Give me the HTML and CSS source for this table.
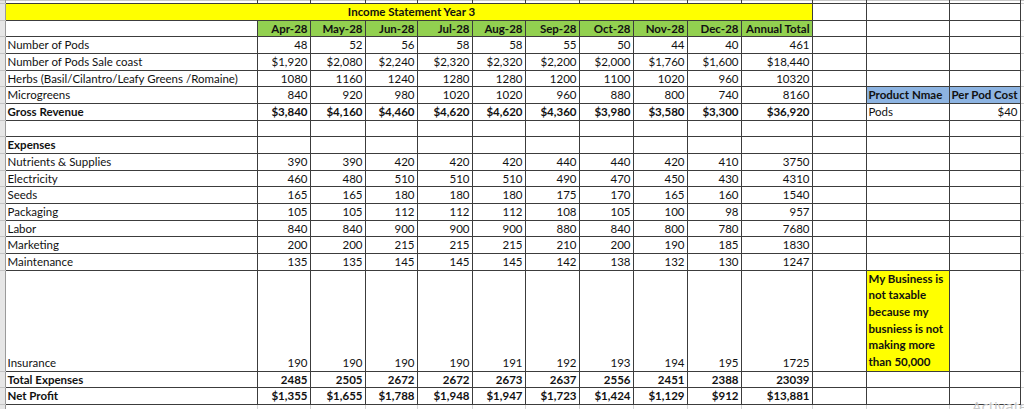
FILE: index.html
```html
<!DOCTYPE html>
<html>
<head>
<meta charset="utf-8">
<link rel="stylesheet" href="styles.css">
</head>
<body>
<div class="sheet">
<table class="grid">
<colgroup>
<col class="c-strip"><col class="c-label">
<col class="c-apr"><col class="c-may"><col class="c-jun"><col class="c-jul"><col class="c-aug"><col class="c-sep"><col class="c-oct"><col class="c-nov"><col class="c-dec">
<col class="c-total"><col class="c-gap"><col class="c-prod"><col class="c-cost"><col class="c-edge">
</colgroup>
<tbody>
<tr class="r-top"><td class="strip"></td><td></td><td></td><td></td><td></td><td></td><td></td><td></td><td></td><td></td><td></td><td></td><td></td><td></td><td></td><td class="edge"></td></tr>
<tr><td class="strip"></td><td class="title" colspan="11">Income Statement Year 3</td><td></td><td></td><td></td><td class="edge"></td></tr>
<tr class="head"><td class="strip"></td><td class="plain"></td><td class="month">Apr-28</td><td class="month">May-28</td><td class="month">Jun-28</td><td class="month">Jul-28</td><td class="month">Aug-28</td><td class="month">Sep-28</td><td class="month">Oct-28</td><td class="month">Nov-28</td><td class="month">Dec-28</td><td class="month">Annual Total</td><td></td><td></td><td></td><td class="edge"></td></tr>
<tr><td class="strip"></td><td class="lbl">Number of Pods</td><td class="num">48</td><td class="num">52</td><td class="num">56</td><td class="num">58</td><td class="num">58</td><td class="num">55</td><td class="num">50</td><td class="num">44</td><td class="num">40</td><td class="num">461</td><td></td><td></td><td></td><td class="edge"></td></tr>
<tr><td class="strip"></td><td class="lbl">Number of Pods Sale coast</td><td class="num">$1,920</td><td class="num">$2,080</td><td class="num">$2,240</td><td class="num">$2,320</td><td class="num">$2,320</td><td class="num">$2,200</td><td class="num">$2,000</td><td class="num">$1,760</td><td class="num">$1,600</td><td class="num">$18,440</td><td></td><td></td><td></td><td class="edge"></td></tr>
<tr><td class="strip"></td><td class="lbl">Herbs (Basil/Cilantro/Leafy Greens /Romaine)</td><td class="num">1080</td><td class="num">1160</td><td class="num">1240</td><td class="num">1280</td><td class="num">1280</td><td class="num">1200</td><td class="num">1100</td><td class="num">1020</td><td class="num">960</td><td class="num">10320</td><td></td><td></td><td></td><td class="edge"></td></tr>
<tr><td class="strip"></td><td class="lbl">Microgreens</td><td class="num">840</td><td class="num">920</td><td class="num">980</td><td class="num">1020</td><td class="num">1020</td><td class="num">960</td><td class="num">880</td><td class="num">800</td><td class="num">740</td><td class="num">8160</td><td></td><td class="blue">Product Nmae</td><td class="blue">Per Pod Cost</td><td class="edge"></td></tr>
<tr class="bold"><td class="strip"></td><td class="lbl">Gross Revenue</td><td class="num">$3,840</td><td class="num">$4,160</td><td class="num">$4,460</td><td class="num">$4,620</td><td class="num">$4,620</td><td class="num">$4,360</td><td class="num">$3,980</td><td class="num">$3,580</td><td class="num">$3,300</td><td class="num">$36,920</td><td></td><td class="lbl normal">Pods</td><td class="num normal">$40</td><td class="edge"></td></tr>
<tr><td class="strip"></td><td></td><td></td><td></td><td></td><td></td><td></td><td></td><td></td><td></td><td></td><td></td><td></td><td></td><td></td><td class="edge"></td></tr>
<tr class="bold"><td class="strip"></td><td class="lbl">Expenses</td><td></td><td></td><td></td><td></td><td></td><td></td><td></td><td></td><td></td><td></td><td></td><td></td><td></td><td class="edge"></td></tr>
<tr><td class="strip"></td><td class="lbl">Nutrients &amp; Supplies</td><td class="num">390</td><td class="num">390</td><td class="num">420</td><td class="num">420</td><td class="num">420</td><td class="num">440</td><td class="num">440</td><td class="num">420</td><td class="num">410</td><td class="num">3750</td><td></td><td></td><td></td><td class="edge"></td></tr>
<tr><td class="strip"></td><td class="lbl">Electricity</td><td class="num">460</td><td class="num">480</td><td class="num">510</td><td class="num">510</td><td class="num">510</td><td class="num">490</td><td class="num">470</td><td class="num">450</td><td class="num">430</td><td class="num">4310</td><td></td><td></td><td></td><td class="edge"></td></tr>
<tr><td class="strip"></td><td class="lbl">Seeds</td><td class="num">165</td><td class="num">165</td><td class="num">180</td><td class="num">180</td><td class="num">180</td><td class="num">175</td><td class="num">170</td><td class="num">165</td><td class="num">160</td><td class="num">1540</td><td></td><td></td><td></td><td class="edge"></td></tr>
<tr><td class="strip"></td><td class="lbl">Packaging</td><td class="num">105</td><td class="num">105</td><td class="num">112</td><td class="num">112</td><td class="num">112</td><td class="num">108</td><td class="num">105</td><td class="num">100</td><td class="num">98</td><td class="num">957</td><td></td><td></td><td></td><td class="edge"></td></tr>
<tr><td class="strip"></td><td class="lbl">Labor</td><td class="num">840</td><td class="num">840</td><td class="num">900</td><td class="num">900</td><td class="num">900</td><td class="num">880</td><td class="num">840</td><td class="num">800</td><td class="num">780</td><td class="num">7680</td><td></td><td></td><td></td><td class="edge"></td></tr>
<tr><td class="strip"></td><td class="lbl">Marketing</td><td class="num">200</td><td class="num">200</td><td class="num">215</td><td class="num">215</td><td class="num">215</td><td class="num">210</td><td class="num">200</td><td class="num">190</td><td class="num">185</td><td class="num">1830</td><td></td><td></td><td></td><td class="edge"></td></tr>
<tr><td class="strip"></td><td class="lbl">Maintenance</td><td class="num">135</td><td class="num">135</td><td class="num">145</td><td class="num">145</td><td class="num">145</td><td class="num">142</td><td class="num">138</td><td class="num">132</td><td class="num">130</td><td class="num">1247</td><td></td><td></td><td></td><td class="edge"></td></tr>
<tr class="tall"><td class="strip"></td><td class="lbl">Insurance</td><td class="num">190</td><td class="num">190</td><td class="num">190</td><td class="num">190</td><td class="num">191</td><td class="num">192</td><td class="num">193</td><td class="num">194</td><td class="num">195</td><td class="num">1725</td><td></td><td class="note">My Business is<br>not taxable<br>because my<br>busniess is not<br>making more<br>than 50,000</td><td></td><td class="edge"></td></tr>
<tr class="bold"><td class="strip"></td><td class="lbl">Total Expenses</td><td class="num">2485</td><td class="num">2505</td><td class="num">2672</td><td class="num">2672</td><td class="num">2673</td><td class="num">2637</td><td class="num">2556</td><td class="num">2451</td><td class="num">2388</td><td class="num">23039</td><td></td><td></td><td></td><td class="edge"></td></tr>
<tr class="bold"><td class="strip"></td><td class="lbl">Net Profit</td><td class="num">$1,355</td><td class="num">$1,655</td><td class="num">$1,788</td><td class="num">$1,948</td><td class="num">$1,947</td><td class="num">$1,723</td><td class="num">$1,424</td><td class="num">$1,129</td><td class="num">$912</td><td class="num">$13,881</td><td></td><td></td><td></td><td class="edge"></td></tr>
<tr class="r-after"><td class="strip"></td><td></td><td></td><td></td><td></td><td></td><td></td><td></td><td></td><td></td><td></td><td></td><td></td><td></td><td></td><td class="edge"></td></tr>
</tbody>
</table>
<div class="watermark">Activate Windows</div>
</div>
</body>
</html>
```
FILE: styles.css
```css
html, body {
  margin: 0;
  padding: 0;
  background: #ffffff;
}
body {
  width: 1024px;
  height: 409px;
  overflow: hidden;
  font-family: Lato, "Liberation Sans", sans-serif;
  font-size: 11.5px;
  color: #111;
}
.sheet {
  position: relative;
  width: 1024px;
  height: 409px;
  overflow: hidden;
}
.grid {
  border-collapse: collapse;
  table-layout: fixed;
  width: 1026px;
}
.c-strip { width: 5px; }
.c-label { width: 252px; }
.c-apr { width: 53px; }
.c-may { width: 55px; }
.c-jun { width: 52px; }
.c-jul { width: 55px; }
.c-aug { width: 53px; }
.c-sep { width: 54px; }
.c-oct { width: 54px; }
.c-nov { width: 54px; }
.c-dec { width: 54px; }
.c-total { width: 71px; }
.c-gap { width: 54px; }
.c-prod { width: 83px; }
.c-cost { width: 71px; }
.c-edge { width: 6px; }

.grid td {
  border: 1px solid #3c3c3c;
  padding: 0 2px 1.5px 2px;
  height: 16.67px;
  line-height: 13px;
  vertical-align: bottom;
  white-space: nowrap;
  overflow: hidden;
  box-sizing: border-box;
}
.grid tr.r-top td {
  height: 3px;
  padding: 0;
  border-top: 1px solid #c8c8c8;
}
.grid tr.r-after td {
  height: 6px;
  padding: 0;
  border-bottom: none;
  border-left-color: #d4d4d4;
  border-right-color: #d4d4d4;
}
.grid tr.r-after td.strip {
  border-right-color: #9a9a9a;
}
.grid td.strip {
  background: #e6e6e6;
  border-left: none;
  border-color: #c4c4c4;
  border-right: 1px solid #9a9a9a;
  padding: 0;
}
.grid td.edge {
  border-right: none;
  border-left-color: #8a8a8a;
  border-top-color: #d0d0d0;
  border-bottom-color: #d0d0d0;
  padding: 0;
}
.grid td.title {
  background: #ffff00;
  text-align: center;
  font-weight: 700;
  padding-left: 8px;
}
.grid td.month {
  background: #92d050;
  text-align: right;
  font-weight: 700;
}
.grid td.lbl {
  text-align: left;
}
.grid td.num {
  text-align: right;
}
.grid tr.bold td {
  font-weight: 700;
}
.grid tr.bold td.normal {
  font-weight: 400;
}
.grid td.blue {
  background: #8db4e2;
  font-weight: 700;
  text-align: left;
}
.grid tr.tall td {
  height: 100px;
}
.grid td.note {
  background: #ffff00;
  vertical-align: top;
  font-weight: 700;
  line-height: 16.67px;
  white-space: normal;
  padding: 0 2px;
}
.watermark {
  position: absolute;
  left: 972px;
  top: 396px;
  font-family: "Open Sans", "Liberation Sans", sans-serif;
  font-size: 15px;
  color: #c9c9c9;
  white-space: nowrap;
}
```
